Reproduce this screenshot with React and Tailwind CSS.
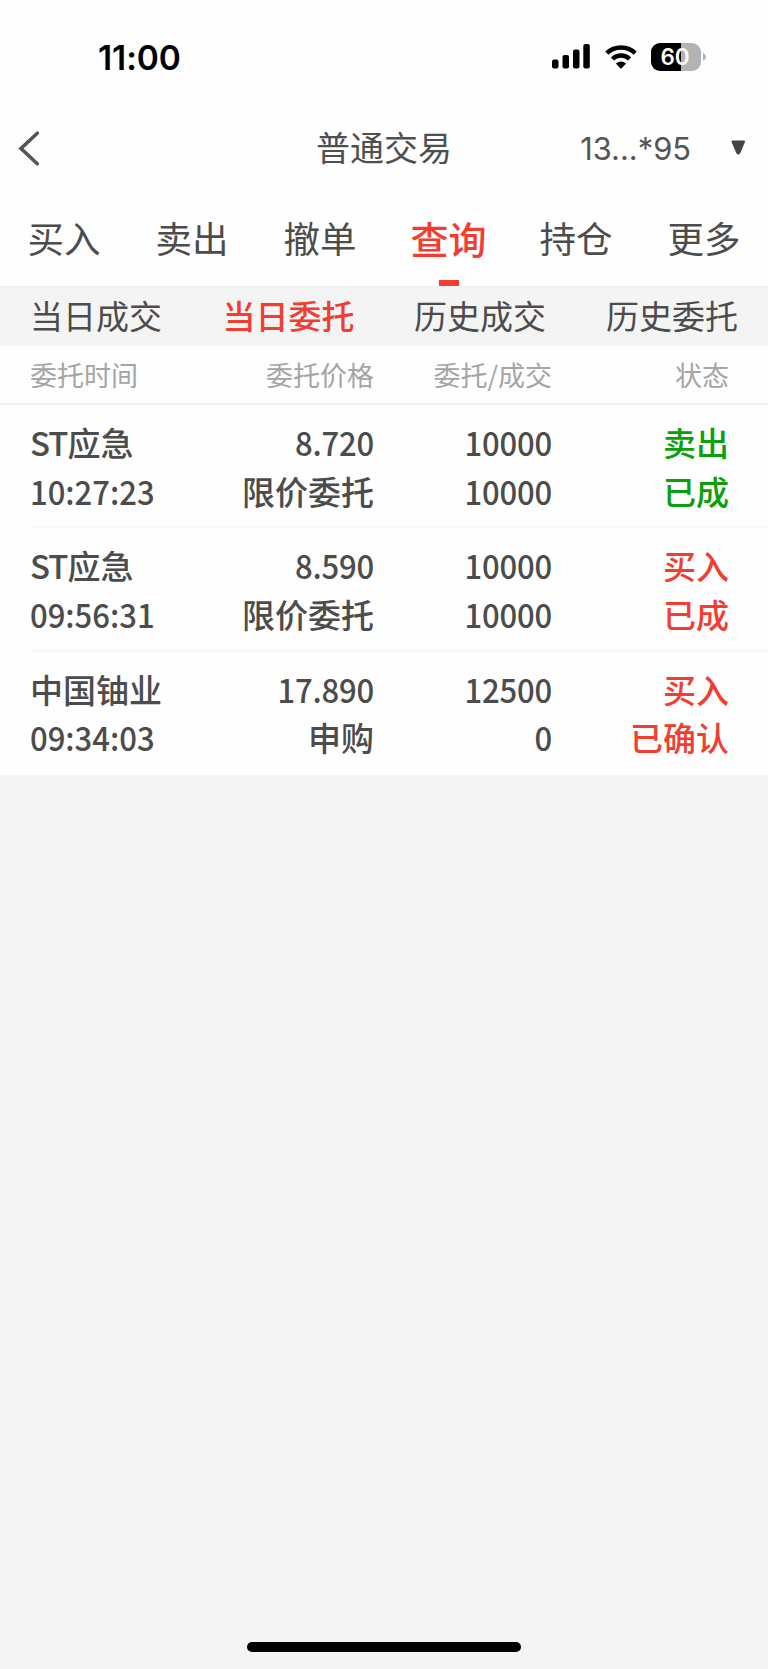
const tabs = ["买入", "卖出", "撤单", "查询", "持仓", "更多"];
const subTabs = ["当日成交", "当日委托", "历史成交", "历史委托"];
const orders = [
  { prefix: "ST", name: "应急", time: "10:27:23", price: "8.720", kind: "限价委托", qty: "10000", done: "10000", side: "卖出", status: "已成", color: "text-[#09a009]" },
  { prefix: "ST", name: "应急", time: "09:56:31", price: "8.590", kind: "限价委托", qty: "10000", done: "10000", side: "买入", status: "已成", color: "text-[#f23d30]" },
  { prefix: "", name: "中国铀业", time: "09:34:03", price: "17.890", kind: "申购", qty: "12500", done: "0", side: "买入", status: "已确认", color: "text-[#f23d30]" },
];

function StatusBar() {
  return (
    <div className="flex h-[114px] items-center justify-between pl-[98px] pr-[62px] font-['Inter',sans-serif]">
      <span className="pt-[3px] text-[33.5px] font-semibold leading-none tracking-[-0.1px] text-black">11:00</span>
      <div className="flex items-center">
        <svg width="38" height="26" viewBox="0 0 38 26">
          <rect x="0" y="15.5" width="6.5" height="9" rx="2" />
          <rect x="10.5" y="11" width="6.5" height="13.5" rx="2" />
          <rect x="21" y="5.5" width="6.5" height="19" rx="2" />
          <rect x="31.3" y="0" width="6.5" height="24.5" rx="2" />
        </svg>
        <svg className="ml-[14px]" width="34" height="26" viewBox="0 0 34 26">
          <path d="M2.8 9.2 A20.5 20.5 0 0 1 31.2 9.2" fill="none" stroke="#000" strokeWidth="4.6" />
          <path d="M8.4 15 A12.5 12.5 0 0 1 25.6 15" fill="none" stroke="#000" strokeWidth="4.4" />
          <path d="M11.9 19.4 Q17 15.4 22.1 19.4 L17.7 24.2 Q17 24.9 16.3 24.2Z" />
        </svg>
        <div className="ml-[13px] flex h-[28px] w-[50px] items-center justify-center rounded-[9px] bg-[linear-gradient(90deg,#000_60%,#b3b3b3_60%)]">
          <span className="pr-[2px] text-[22.5px] font-semibold leading-none text-white">60</span>
        </div>
        <svg className="ml-[2px]" width="3" height="8" viewBox="0 0 3 8">
          <path d="M0 0 Q3 1.5 3 4 Q3 6.5 0 8Z" fill="#b3b3b3" />
        </svg>
      </div>
    </div>
  );
}

function NavBar() {
  return (
    <div className="grid h-[68px] grid-cols-3 items-center text-[#4f4f4f]">
      <svg className="ml-[18px]" width="22" height="35" viewBox="0 0 22 35">
        <path d="M19.3 2.2 L3 17.5 L19.3 32.8" fill="none" stroke="#555" strokeWidth="3.6" strokeLinecap="round" />
      </svg>
      <h1 className="pb-[2px] text-center text-[34px] leading-none">普通交易</h1>
      <div className="flex items-center justify-end pr-[22px]">
        <span className="pt-[2px] font-['Inter',sans-serif] text-[30.8px] leading-none text-[#555]">13...*95</span>
        <svg className="ml-[40px]" width="15" height="15" viewBox="0 0 15 15">
          <path d="M1.5 1.5 H13 L8.2 13 Q7.3 14.2 6.4 13Z" fill="#444" stroke="#444" strokeWidth="2" strokeLinejoin="round" />
        </svg>
      </div>
    </div>
  );
}

function Num({ children, left }) {
  return (
    <span className={left ? "origin-left scale-x-[0.94] text-left" : "origin-right scale-x-[0.94] tracking-[-0.2px]"}>
      {children}
    </span>
  );
}

export default function App() {
  return (
    <div className="flex h-[1669px] w-[768px] flex-col overflow-hidden bg-[#f4f4f4] font-['Noto_Sans_CJK_SC',sans-serif] text-[#4c4c4c]">
      <div className="bg-[#fefefe]">
        <StatusBar />
        <NavBar />
        <nav className="grid h-[104px] grid-cols-6">
          {tabs.map((t) =>
            t === "查询" ? (
              <div key={t} className="flex flex-col items-center justify-between text-[#f23d30]">
                <span className="pl-px pt-[37px] text-[38px] font-medium leading-[38px]">{t}</span>
                <span className="ml-px h-[6px] w-[20px] bg-[#f23d30]" />
              </div>
            ) : (
              <div key={t} className="pt-[38px] text-center text-[36.5px] leading-[36px]">{t}</div>
            )
          )}
        </nav>
      </div>
      <div className="grid h-[60px] grid-cols-4 items-center border-t border-[#efefef] pb-[2px] text-center text-[33px] leading-none">
        {subTabs.map((t) => (
          <span key={t} className={t === "当日委托" ? "pl-px font-medium text-[#f23d30]" : ""}>{t}</span>
        ))}
      </div>
      <div className="grid h-[59px] grid-cols-[344px_178px_177px] items-center border-b-2 border-[#f1f1f1] bg-[#fefefe] pl-[30px] text-right text-[27px] leading-none text-[#a5a5a5]">
        <div className="flex justify-between">
          <span>委托时间</span>
          <span>委托价格</span>
        </div>
        <span>委托/成交</span>
        <span>状态</span>
      </div>
      <div className="bg-[#fefefe] pl-[30px]">
        {orders.map((o) => (
          <div
            key={o.time}
            className="grid h-[123.3px] grid-cols-[165px_179px_178px_177px] content-center border-b-2 border-[#f8f8f8] pt-[2px] text-right text-[33px] font-medium leading-[48.6px] last:border-transparent"
          >
            <span className="text-left">
              {o.prefix && <span className="tracking-[-1px]">{o.prefix}</span>}
              {o.name}
            </span>
            <Num>{o.price}</Num>
            <Num>{o.qty}</Num>
            <span className={o.color}>{o.side}</span>
            <Num left>{o.time}</Num>
            <span>{o.kind}</span>
            <Num>{o.done}</Num>
            <span className={o.color}>{o.status}</span>
          </div>
        ))}
      </div>
      <div className="mx-auto mb-[17px] mt-auto h-[10px] w-[274px] rounded-full bg-black" />
    </div>
  );
}
